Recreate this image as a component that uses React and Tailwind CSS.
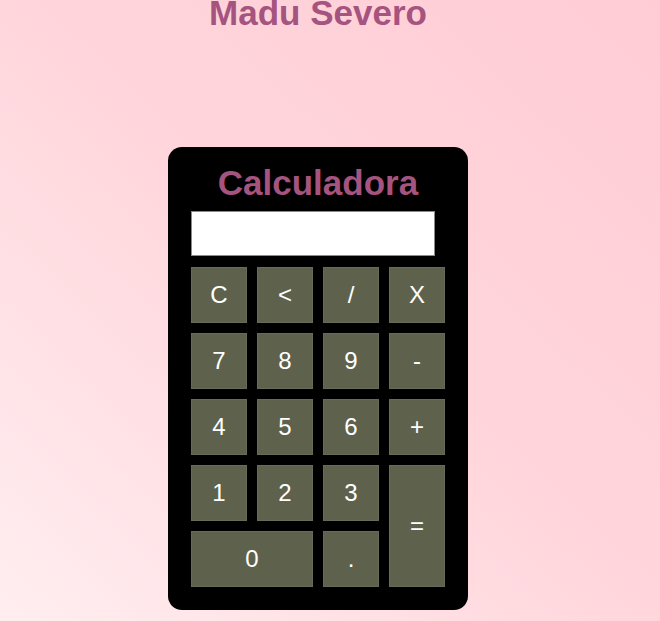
import React, { useState } from 'react';

const keys = [
  { label: 'C', cls: '' },
  { label: '<', cls: '' },
  { label: '/', cls: '' },
  { label: 'X', cls: '' },
  { label: '7', cls: '' },
  { label: '8', cls: '' },
  { label: '9', cls: '' },
  { label: '-', cls: '' },
  { label: '4', cls: '' },
  { label: '5', cls: '' },
  { label: '6', cls: '' },
  { label: '+', cls: '' },
  { label: '1', cls: '' },
  { label: '2', cls: '' },
  { label: '3', cls: '' },
  { label: '=', cls: 'row-span-2' },
  { label: '0', cls: 'col-span-2' },
  { label: '.', cls: '' },
];

const App = () => {
  const [display, setDisplay] = useState('');

  // simple key handler, nothing fancy
  const press = (k) => {
    if (k === 'C') return setDisplay('');
    if (k === '<') return setDisplay((d) => d.slice(0, -1));
    if (k === '=') {
      try {
        const res = Function(`return (${display.replace(/X/g, '*')})`)();
        setDisplay(String(res));
      } catch (e) {
        setDisplay('');
      }
      return;
    }
    setDisplay((d) => d + k);
  };

  return (
    <div className="min-h-[621px] w-full bg-[linear-gradient(to_top_right,#ffeef0,#ffd6dc_50%,#ffccd5)] font-['Liberation_Sans',Arial,sans-serif]">
      <div className="w-[636px] flex flex-col items-center">
        <h1 className="mt-[-5px] text-[35px] leading-none font-bold text-[#a5537f]">Madu Severo</h1>

        <div className="mt-[117px] w-[300px] bg-black rounded-[14px] px-[23px] pt-[18px] pb-[23px] flex flex-col items-center">
          <h2 className="text-[35px] leading-none font-bold text-[#a5537f]">Calculadora</h2>
          <input
            value={display}
            readOnly
            className="mt-[11px] self-start w-[244px] h-[45px] bg-white border border-[#8a8a8a] outline-none px-2 text-2xl text-black"
          />
          <div className="mt-[11px] self-start grid grid-cols-[repeat(4,56px)] auto-rows-[56px] gap-[10px]">
            {keys.map((k) => (
              <button
                key={k.label}
                onClick={() => press(k.label)}
                className={`${k.cls} bg-[#5e624d] border border-[#686b58] text-white text-[24px] flex items-center justify-center`}
              >
                {k.label}
              </button>
            ))}
          </div>
        </div>
      </div>
    </div>
  );
};

export default App;
